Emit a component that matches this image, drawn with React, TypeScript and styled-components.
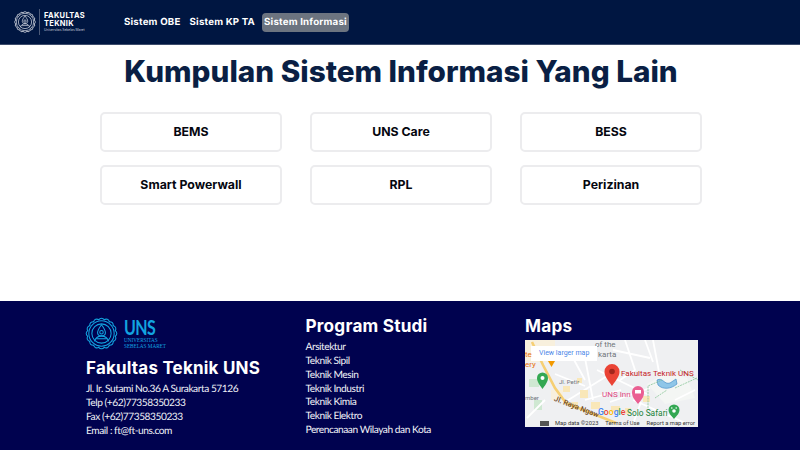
import React from "react";
import styled, { createGlobalStyle } from "styled-components";

const Global = createGlobalStyle`
  html, body { margin: 0; padding: 0; background: #fff; }
  body { width: 800px; height: 450px; overflow: hidden; font-family: "Lato", sans-serif; }
  * { box-sizing: border-box; }
`;
const Page = styled.div`
  width: 800px; height: 450px; display: flex; flex-direction: column; background: #fff; overflow: hidden;
`;
const Header = styled.header`
  height: 45px; flex: none; background: #001641; display: flex; align-items: center; padding-left: 13px;
  border-bottom: 1px solid #3d4c6c;
`;
const Brand = styled.div`
  width: 109px; display: flex; align-items: center; flex: none;
`;
const BrandDivider = styled.div`
  width: 1px; height: 26px; background: #4c5a78; margin: 0 4px 0 2px; flex: none;
`;
const BrandText = styled.div`
  display: flex; flex-direction: column; color: #fff; font-family: "Inter", sans-serif; font-weight: 700;
  font-size: 7.5px; line-height: 8px; letter-spacing: .3px;
`;
const BrandSub = styled.span`
  font-size: 3.3px; line-height: 5px; font-weight: 400; letter-spacing: 0; color: #c5cbd8; white-space: nowrap;
`;
const Nav = styled.nav`
  display: flex; align-items: center; gap: 5px;
`;
const NavItem = styled.a<{ $active?: boolean }>`
  color: #fff; font-family: "Inter", sans-serif; font-weight: 700; font-size: 9.7px; line-height: 19px;
  letter-spacing: .2px; text-rendering: geometricPrecision;
  height: 19px; padding: 0 2px; border-radius: 4px; white-space: nowrap;
  background: ${(p) => (p.$active ? "#6c7480" : "transparent")};
`;
const Main = styled.main`
  flex: 1; display: flex; flex-direction: column; align-items: center; padding-left: 2px;
`;
const Title = styled.h1`
  margin: 7px 0 0; font-family: "Inter", sans-serif; font-weight: 800; font-size: 29.7px; line-height: 38px;
  color: #0a1f44; letter-spacing: 0;
`;
const CardGrid = styled.div`
  margin-top: 22px; display: grid; grid-template-columns: repeat(3, 182px); grid-auto-rows: 40px;
  column-gap: 28px; row-gap: 13px;
`;
const Card = styled.a`
  display: flex; align-items: center; justify-content: center; background: #fff; padding-bottom: 1px;
  border: 2px solid #ececee; border-radius: 5px; color: #05070f;
  font-family: "Inter", sans-serif; font-weight: 700; font-size: 12.3px;
`;
const Footer = styled.footer`
  height: 149px; flex: none; background: #00024f; color: #fff; padding: 15px 0 0 86px;
  display: grid; grid-template-columns: 219.5px 219.5px 174px; align-items: start;
`;
const Col = styled.div`
  display: flex; flex-direction: column;
`;
const FooterLogo = styled.div`
  display: flex; align-items: flex-start; height: 36px; gap: 5px; margin-left: -2px;
`;
const UnsWords = styled.div`
  display: flex; flex-direction: column; color: #12a4e0; font-family: "Lato", sans-serif; padding-top: 3px;
`;
const UnsMark = styled.span`
  font-size: 20px; line-height: 16px; height: 18px; font-weight: 700; letter-spacing: -.8px;
  transform: scaleX(.8); transform-origin: 0 50%;
`;
const UnsSub = styled.span`
  font-family: "Liberation Serif", serif; font-size: 5.2px; line-height: 6px; white-space: nowrap;
`;
const SchoolName = styled.h2`
  margin: 4px 0 0; font-family: "Inter", sans-serif; font-weight: 700; font-size: 17px; line-height: 24px; letter-spacing: .2px;
`;
const InfoList = styled.div`
  margin-top: 2px; display: flex; flex-direction: column; font-size: 10.2px; line-height: 14px; color: #eef0f6;
  letter-spacing: -.46px; text-rendering: geometricPrecision;
`;
const ColTitle = styled.h2`
  margin: 0; font-family: "Inter", sans-serif; font-weight: 700; font-size: 17.2px; line-height: 20px; letter-spacing: .2px;
`;
const ProdiList = styled.div`
  margin-top: 5px; display: flex; flex-direction: column; font-size: 10.2px; line-height: 13.85px; color: #f2f3f8;
  letter-spacing: -.46px; text-rendering: geometricPrecision;
`;
const MapBox = styled.div`
  position: relative; margin-top: 4px; width: 173px; height: 87px; overflow: hidden; background: #eef0f2;
`;
const MapArt = styled.svg`
  position: absolute; inset: 0; width: 100%; height: 100%;
`;
const LargerMap = styled.div`
  position: absolute; left: 6px; top: 6px; width: 66px; height: 15px; background: #fff;
  color: #4a86e8; font-family: "Roboto", sans-serif; font-size: 7px; line-height: 15px; padding-left: 8px; white-space: nowrap;
`;
const MapLabel = styled.span<{ $color: string; $x: number; $y: number; $size?: number }>`
  position: absolute; left: ${(p) => p.$x}px; top: ${(p) => p.$y}px; color: ${(p) => p.$color};
  font-family: "Roboto", sans-serif; font-size: ${(p) => p.$size ?? 8}px; line-height: 10px; white-space: nowrap;
`;
const MapFooter = styled.div`
  position: absolute; right: 0; bottom: 0; left: 30px; height: 8px; display: flex; justify-content: space-between;
  padding-right: 3px; color: #333; font-family: "Roboto", sans-serif; font-size: 5.8px; line-height: 8px; white-space: nowrap;
`;
const GoogleMark = styled.span`
  position: absolute; left: 73px; top: 68px; font-family: "Roboto", sans-serif; font-size: 8.6px; line-height: 9px; font-weight: 500;
`;
const GLetter = styled.span<{ $c: string }>`color: ${(p) => p.$c};`;
const RoadLabel = styled.span`
  position: absolute; left: 31px; top: 54px; transform: rotate(21deg); transform-origin: 0 0; color: #6f4a26;
  font-family: "Roboto", sans-serif; font-size: 7.5px; line-height: 9px; font-weight: 500; white-space: nowrap;
`;

const Emblem = ({ size, color }: { size: number; color: string }) => {
  const teeth = Array.from({ length: 16 }, (_, i) => i * 22.5);
  return (
    <svg width={size} height={size} viewBox="0 0 40 40" fill="none" stroke={color} strokeWidth="1.2" style={{ flex: "none" }}>
      {teeth.map((a) => (
        <path key={a} d="M16.5 4.5 Q20 0.5 23.5 4.5" transform={`rotate(${a} 20 20)`} />
      ))}
      <circle cx="20" cy="20" r="14.5" />
      <circle cx="20" cy="20" r="11" />
      <path d="M20 10c3 4 4.5 6 4.5 9 0 2-1.5 3.5-4.5 3.5s-4.500-1.500-4.500-3.500c0-3 1.500-5 4.500-9z" />
      <circle cx="20" cy="18.500" r="2" />
      <path d="M12 29c1-4 4-6 8-6s7 2 8 6" />
      <path d="M14 26h12" />
    </svg>
  );
};

const MapBackground = () => (
  <MapArt viewBox="0 0 173 87" preserveAspectRatio="none">
    <rect width="173" height="87" fill="#eff0f2" />
    <path d="M0 0h30v22H0zM26 50h12v10H26z" fill="#fbf0d5" opacity=".75" />
    <path d="M4 39h10v8H4zM9 60h8v10H9z" fill="#cfe8d2" />
    <path d="M122 44l20-12 20 6 8 20-30 6z" fill="#f4f6f4" />
    <path d="M132 40c6-3 7 5 13 3l6-4 1 5c-6 5-14 6-19 1z" fill="#8fc6e8" stroke="#4a90c8" strokeWidth=".7" />
    <path d="M30 34L60 46M60 18L68 60M40 62L82 36M72 30L122 54M85 62L125 48M100 0L110 30L95 40M120 0L128 22M88 10L125 18M108 60L165 85M128 0L134 32M20 60L2 78M48 18L60 40M150 60L170 50M60 60L96 50M116 62L108 84"
      stroke="#fff" strokeWidth="1.8" fill="none" />
    <path d="M38 46h7v6h-7zM55 50h8v8h-8zM46 62h7v7h-7zM66 62h9v7h-9zM86 66h9v6h-9zM100 68h6v6h-6zM118 56h7v6h-7zM52 38h5v5h-5z" fill="#f9e7b8" />
    <path d="M7 2L18 25L30 48L41 63L91 83" stroke="#f6cf74" strokeWidth="2.6" fill="none" />
    <path d="M123 68v-22l14-6M150 48l22-10M155 30l18 10M130 58l12-8" stroke="#7cc08c" strokeWidth=".7" fill="none" strokeDasharray="2 .8" />
    <path d="M23 21h7l-3.500 6z" fill="#f29900" />
    <path d="M17.500 49c-4-5.500-5.500-8-5.500-11a5.500 5.500 0 0 1 11 0c0 3-1.500 5.500-5.500 11z" fill="#34a853" />
    <circle cx="17.500" cy="38" r="2" fill="#fff" />
    <path d="M87 46c-5-7-7.500-10-7.500-14.500a7.500 7.500 0 0 1 15 0c0 4.500-2.500 7.500-7.500 14.500z" fill="#ea4335" />
    <circle cx="87" cy="31.500" r="2.800" fill="#a3261c" />
    <path d="M113 64c-4-5-6-7-6-12a6 6 0 0 1 12 0c0 5-2 7-6 12z" fill="#ea5f92" />
    <path d="M110 50h6v3.500h-6z" fill="#fff" />
    <path d="M149 79c-3.500-4-5.500-6-5.500-9a5.500 5.500 0 0 1 11 0c0 3-2 5-5.500 9z" fill="#34a853" />
    <circle cx="149" cy="71" r="1.800" fill="#fff" />
    <circle cx="146.800" cy="68" r=".8" fill="#fff" />
    <circle cx="151.200" cy="68" r=".8" fill="#fff" />
    <rect x="15" y="81" width="9" height="5" fill="#555" />
  </MapArt>
);

export default function App() {
  const prodi = ["Arsitektur", "Teknik Sipil", "Teknik Mesin", "Teknik Industri", "Teknik Kimia", "Teknik Elektro", "Perencanaan Wilayah dan Kota"];
  const cards = ["BEMS", "UNS Care", "BESS", "Smart Powerwall", "RPL", "Perizinan"];
  return (
    <Page>
      <Global />
      <Header>
        <Brand>
          <Emblem size={24} color="#d7dbe4" />
          <BrandDivider />
          <BrandText>
            <span>FAKULTAS</span>
            <span>TEKNIK</span>
            <BrandSub>Universitas Sebelas Maret</BrandSub>
          </BrandText>
        </Brand>
        <Nav>
          <NavItem>Sistem OBE</NavItem>
          <NavItem>Sistem KP TA</NavItem>
          <NavItem $active>Sistem Informasi</NavItem>
        </Nav>
      </Header>
      <Main>
        <Title>Kumpulan Sistem Informasi Yang Lain</Title>
        <CardGrid>
          {cards.map((c) => <Card key={c}>{c}</Card>)}
        </CardGrid>
      </Main>
      <Footer>
        <Col>
          <FooterLogo>
            <Emblem size={35} color="#12a4e0" />
            <UnsWords>
              <UnsMark>UNS</UnsMark>
              <UnsSub>UNIVERSITAS</UnsSub>
              <UnsSub>SEBELAS MARET</UnsSub>
            </UnsWords>
          </FooterLogo>
          <SchoolName>Fakultas Teknik UNS</SchoolName>
          <InfoList>
            <span>Jl. Ir. Sutami No.36 A Surakarta 57126</span>
            <span>Telp (+62)77358350233</span>
            <span>Fax (+62)77358350233</span>
            <span>Email : ft@ft-uns.com</span>
          </InfoList>
        </Col>
        <Col>
          <ColTitle>Program Studi</ColTitle>
          <ProdiList>
            {prodi.map((p) => <span key={p}>{p}</span>)}
          </ProdiList>
        </Col>
        <Col>
          <ColTitle>Maps</ColTitle>
          <MapBox>
            <MapBackground />
            <MapLabel $color="#70757a" $x={70} $y={0}>of the</MapLabel>
            <MapLabel $color="#70757a" $x={73} $y={10}>karta</MapLabel>
            <LargerMap>View larger map</LargerMap>
            <MapLabel $color="#e8710a" $x={0} $y={10}>te</MapLabel>
            <MapLabel $color="#e8710a" $x={0} $y={20}>ery</MapLabel>
            <MapLabel $color="#70757a" $x={34} $y={37} $size={6}>Jl. Petir</MapLabel>
            <MapLabel $color="#70757a" $x={0} $y={53} $size={6}>mber</MapLabel>
            <MapLabel $color="#c5221f" $x={96} $y={29}>Fakultas Teknik UNS</MapLabel>
            <MapLabel $color="#e0457f" $x={77} $y={50}>UNS Inn</MapLabel>
            <MapLabel $color="#188038" $x={102} $y={68} $size={8.4}>Solo Safari</MapLabel>
            <RoadLabel>Jl. Raya Ngaw</RoadLabel>
            <GoogleMark>
              <GLetter $c="#4285f4">G</GLetter><GLetter $c="#ea4335">o</GLetter><GLetter $c="#fbbc05">o</GLetter><GLetter $c="#4285f4">g</GLetter><GLetter $c="#34a853">l</GLetter><GLetter $c="#ea4335">e</GLetter>
            </GoogleMark>
            <MapFooter>
              <span>Map data ©2023</span><span>Terms of Use</span><span>Report a map error</span>
            </MapFooter>
          </MapBox>
        </Col>
      </Footer>
    </Page>
  );
}
